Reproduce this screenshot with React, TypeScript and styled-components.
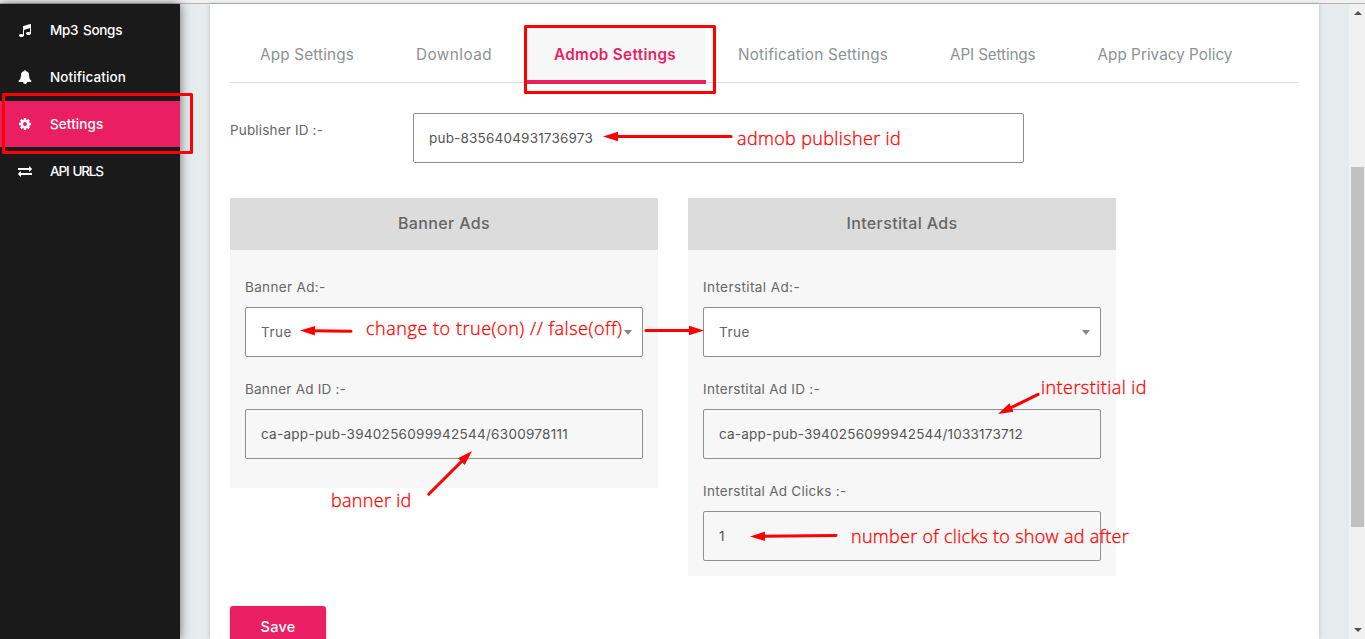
import React from 'react';
import styled, { createGlobalStyle, css } from 'styled-components';

const PINK = '#ea1f63';
const RED = '#ff0000';

const Global = createGlobalStyle`
  *, *::before, *::after { box-sizing: border-box; }
  body { margin: 0; overflow: hidden; background: #e6ebee; }
  button, input { font: inherit; }
`;

const Page = styled.div`
  position: relative;
  display: flex;
  flex-direction: column;
  height: 639px;
  overflow: hidden;
  font-family: Inter, "Liberation Sans", sans-serif;
`;

const TopEdge = styled.div`
  flex: none;
  height: 4px;
  background: #f1f1f1;
  border-bottom: 1px solid #b4b4b4;
`;

const Body = styled.div`
  flex: 1;
  display: flex;
  min-height: 0;
  background: #e6ebee;
`;

const Sidebar = styled.nav`
  flex: none;
  position: relative;
  width: 180px;
  padding-top: 3px;
  background: #1a1a1a;
  box-shadow: 0 0 10px rgba(0, 0, 0, 0.55);
`;

const NavItem = styled.a<{ $active?: boolean; $spacing: number }>`
  display: flex;
  align-items: center;
  gap: 18px;
  height: 46px;
  margin-bottom: 1px;
  padding-left: 18px;
  color: #fff;
  background: ${(p) => (p.$active ? PINK : 'transparent')};
  font-size: 13.5px;
  font-weight: 500;
  letter-spacing: ${(p) => p.$spacing}px;
  word-spacing: 1.5px;
`;

const NavIcon = styled.svg`
  flex: none;
  width: 14px;
  height: 14px;
  fill: #fff;
`;

const Card = styled.main`
  flex: none;
  width: 1109px;
  margin-left: 30px;
  padding: 24px 21px 0 20px;
  background: #fff;
  box-shadow: 0 0 4px rgba(60, 80, 90, 0.3);
`;

const Tabs = styled.div`
  display: flex;
  gap: 2px;
  height: 55px;
  margin-bottom: 30px;
  border-bottom: 1px solid #dddddd;
`;

const Tab = styled.a<{ $width: number; $spacing: number; $active?: boolean }>`
  flex: none;
  width: ${(p) => p.$width}px;
  height: 56px;
  padding-left: 30px;
  line-height: 54px;
  white-space: nowrap;
  font-size: 15.25px;
  letter-spacing: ${(p) => p.$spacing}px;
  color: #8d9295;
  ${(p) =>
    p.$active &&
    css`
      color: ${PINK};
      font-weight: 600;
      background: #f7f7f7;
      border-bottom: 4px solid ${PINK};
    `}
`;

const PublisherRow = styled.div`
  display: flex;
  margin-bottom: 35px;
`;

const Label = styled.label<{ $spacing?: number }>`
  display: block;
  height: 20px;
  line-height: 20px;
  white-space: nowrap;
  font-size: 13.5px;
  letter-spacing: ${(p) => p.$spacing ?? 0.28}px;
  color: #666;
`;

const PublisherLabel = styled(Label)`
  width: 183px;
  margin-top: 7px;
`;

const fieldBox = css`
  display: block;
  height: 50px;
  border: 1px solid #8f8f8f;
  border-radius: 2px;
  padding: 0 15px;
  font-size: 13.5px;
  color: #555;
`;

const TextInput = styled.input<{ $width: number; $spacing: number }>`
  ${fieldBox}
  width: ${(p) => p.$width}px;
  letter-spacing: ${(p) => p.$spacing}px;
  background: transparent;
  outline: none;
`;

const Select = styled.div`
  ${fieldBox}
  display: flex;
  align-items: center;
  justify-content: space-between;
  padding-right: 10px;
  letter-spacing: 0.5px;
  color: #666;
  background: #fff;

  &::after {
    content: '';
    border: 4px solid transparent;
    border-top: 5px solid #888;
    border-bottom: 0;
  }
`;

const Panels = styled.div`
  display: flex;
  align-items: flex-start;
  gap: 30px;
`;

const Panel = styled.section<{ $bottom: number }>`
  width: 428px;
  padding-bottom: ${(p) => p.$bottom}px;
  background: #f7f7f7;
`;

const PanelTitle = styled.h2`
  margin: 0 0 27px;
  height: 52px;
  line-height: 51px;
  text-align: center;
  font-size: 16px;
  font-weight: 500;
  letter-spacing: 0.36px;
  color: #666;
  background: #dcdcdc;
`;

const PanelBody = styled.div`
  display: flex;
  flex-direction: column;
  gap: 22px;
  padding: 0 15px;
`;

const Field = styled.div`
  display: flex;
  flex-direction: column;
  gap: 10px;
`;

const SaveButton = styled.button`
  display: block;
  width: 96px;
  height: 42px;
  margin-top: 30px;
  padding: 0 0 2px;
  border: 0;
  border-radius: 3px;
  color: #fff;
  background: ${PINK};
  box-shadow: 0 1px 3px rgba(0, 0, 0, 0.25);
  font-size: 14.5px;
  font-weight: 500;
  letter-spacing: 0.26px;
`;

const Scrollbar = styled.div`
  display: flex;
  flex-direction: column;
  align-items: center;
  width: 16px;
  margin-left: auto;
  padding: 7px 0 7px 1px;
  background: #f1f1f1;
`;

const Thumb = styled.div`
  width: 13px;
  height: 360px;
  margin: 152px 0 auto;
  background: #c1c1c1;
`;

const ScrollArrow = styled.div<{ $down?: boolean }>`
  border: 4px solid transparent;
  ${(p) =>
    p.$down
      ? css`border-top-color: #505050; border-bottom: 0;`
      : css`border-bottom-color: #505050; border-top: 0;`}
`;

const Marks = styled.svg`
  position: absolute;
  inset: 0;
  pointer-events: none;
`;

const Note = styled.span<{ $x: number; $y: number; $spacing: number }>`
  position: absolute;
  left: ${(p) => p.$x}px;
  top: ${(p) => p.$y}px;
  font: 300 18px/24px "Open Sans", "Noto Sans", sans-serif;
  letter-spacing: ${(p) => p.$spacing}px;
  white-space: nowrap;
  color: ${RED};
  -webkit-text-stroke: 0.3px ${RED};
`;

const icons = {
  music:
    'M1664 224v1120q0 50-34 89t-86 60.5-103.5 32-96.5 10.5-96.5-10.5-103.5-32-86-60.5-34-89 34-89 86-60.5 103.5-32 96.5-10.5q105 0 192 39v-537l-768 237v709q0 50-34 89t-86 60.5-103.5 32-96.5 10.5-96.5-10.5-103.5-32-86-60.5-34-89 34-89 86-60.5 103.5-32 96.5-10.5q105 0 192 39v-967q0-31 19-56.5t49-35.5l832-256q12-4 28-4 40 0 68 28t28 68z',
  bell:
    'M912 1696q0-16-16-16-59 0-101.5-42.5t-42.5-101.5q0-16-16-16t-16 16q0 73 51.5 124.5t124.5 51.5q16 0 16-16zm816-288q0 52-38 90t-90 38h-448q0 106-75 181t-181 75-181-75-75-181h-448q-52 0-90-38t-38-90q50-42 91-88t85-119.5 74.5-158.5 50-206 19.5-260q0-152 117-282.5t307-158.5q-8-19-8-39 0-40 28-68t68-28 68 28 28 68q0 20-8 39 190 28 307 158.5t117 282.5q0 139 19.5 260t50 206 74.5 158.5 85 119.5 91 88z',
  cog:
    'M1152 896q0-106-75-181t-181-75-181 75-75 181 75 181 181 75 181-75 75-181zm512-109v222q0 12-8 23t-20 13l-185 28q-19 54-39 91 35 50 107 138 10 12 10 25t-9 23q-27 37-99 108t-94 71q-12 0-26-9l-138-108q-44 23-91 38-16 136-29 186-7 28-36 28h-222q-14 0-24.5-8.5t-11.5-21.5l-28-184q-49-16-90-37l-141 107q-10 9-25 9-14 0-25-11-126-114-165-168-7-10-7-23 0-12 8-23 15-21 51-66.5t54-70.5q-27-50-41-99l-183-27q-13-2-21-12.5t-8-23.5v-222q0-12 8-23t19-13l186-28q14-46 39-92-40-57-107-138-10-12-10-24 0-10 9-23 26-36 98.5-107.5t94.5-71.5q13 0 26 10l138 107q44-23 91-38 16-136 29-186 7-28 36-28h222q14 0 24.5 8.5t11.5 21.5l28 184q49 16 90 37l142-107q9-9 24-9 13 0 25 10 129 119 165 170 7 8 7 22 0 12-8 23-15 21-51 66.5t-54 70.5q26 50 41 98l183 28q13 2 21 12.5t8 23.5z',
  exchange:
    'M1792 1184v192q0 13-9.5 22.5t-22.5 9.5h-1376v192q0 13-9.5 22.5t-22.5 9.5q-12 0-24-10l-319-320q-9-9-9-22 0-14 9-23l320-320q9-9 23-9 13 0 22.5 9.5t9.5 22.5v192h1376q13 0 22.5 9.5t9.5 22.5zm0-544q0 14-9 23l-320 320q-9 9-23 9-13 0-22.5-9.5t-9.5-22.5v-192h-1376q-13 0-22.5-9.5t-9.5-22.5v-192q0-13 9.5-22.5t22.5-9.5h1376v-192q0-14 9-23t23-9q12 0 24 10l319 319q9 9 9 23z',
};

const navItems = [
  { label: 'Mp3 Songs', icon: icons.music, spacing: -0.3 },
  { label: 'Notification', icon: icons.bell, spacing: 0.1 },
  { label: 'Settings', icon: icons.cog, spacing: 0.1, active: true },
  { label: 'API URLS', icon: icons.exchange, spacing: -1.15 },
];

const tabs = [
  { label: 'App Settings', width: 154, spacing: 0.175 },
  { label: 'Download', width: 136, spacing: 0.47 },
  { label: 'Admob Settings', width: 182, spacing: 0.34, active: true },
  { label: 'Notification Settings', width: 210, spacing: 0.21 },
  { label: 'API Settings', width: 145.5, spacing: -0.13 },
  { label: 'App Privacy Policy', width: 195, spacing: 0.03 },
];

// Each arrow runs from its tail to its tip.
const arrows = [
  [732, 136.5, 603, 136.5],
  [352, 331.3, 300, 330.5],
  [645, 330.5, 704, 330.5],
  [428, 495, 472, 451],
  [1039, 394, 998, 414],
  [837, 535.5, 750, 536.5],
];

function Arrow({ points }: { points: number[] }) {
  const [x1, y1, x2, y2] = points;
  const angle = (Math.atan2(y2 - y1, x2 - x1) * 180) / Math.PI;
  const length = Math.hypot(x2 - x1, y2 - y1);
  return (
    <g transform={`translate(${x1} ${y1}) rotate(${angle})`}>
      <line x1="1" x2={length - 12} y1="0" y2="0" stroke={RED} strokeWidth="3" strokeLinecap="round" />
      <path d={`M${length} 0l-15 -4.7v9.4z`} fill={RED} />
    </g>
  );
}

export default function App() {
  return (
    <Page>
      <Global />
      <TopEdge />
      <Body>
        <Sidebar>
          {navItems.map((item) => (
            <NavItem key={item.label} $active={item.active} $spacing={item.spacing}>
              <NavIcon viewBox="0 0 1792 1792">
                <path d={item.icon} />
              </NavIcon>
              {item.label}
            </NavItem>
          ))}
        </Sidebar>
        <Card>
          <Tabs>
            {tabs.map((tab) => (
              <Tab key={tab.label} $width={tab.width} $spacing={tab.spacing} $active={tab.active}>
                {tab.label}
              </Tab>
            ))}
          </Tabs>
          <PublisherRow>
            <PublisherLabel $spacing={0.165}>Publisher ID :-</PublisherLabel>
            <TextInput $width={611} $spacing={0.193} defaultValue="pub-8356404931736973" />
          </PublisherRow>
          <Panels>
            <Panel $bottom={29}>
              <PanelTitle>Banner Ads</PanelTitle>
              <PanelBody>
                <Field>
                  <Label $spacing={0.337}>Banner Ad:-</Label>
                  <Select>True</Select>
                </Field>
                <Field>
                  <Label $spacing={0.216}>Banner Ad ID :-</Label>
                  <TextInput $width={398} $spacing={0.276} defaultValue="ca-app-pub-3940256099942544/6300978111" />
                </Field>
              </PanelBody>
            </Panel>
            <Panel $bottom={15}>
              <PanelTitle>Interstital Ads</PanelTitle>
              <PanelBody>
                <Field>
                  <Label $spacing={0.409}>Interstital Ad:-</Label>
                  <Select>True</Select>
                </Field>
                <Field>
                  <Label>Interstital Ad ID :-</Label>
                  <TextInput $width={398} $spacing={0.219} defaultValue="ca-app-pub-3940256099942544/1033173712" />
                </Field>
                <Field>
                  <Label>Interstital Ad Clicks :-</Label>
                  <TextInput $width={398} $spacing={0} defaultValue="1" />
                </Field>
              </PanelBody>
            </Panel>
          </Panels>
          <SaveButton>Save</SaveButton>
        </Card>
        <Scrollbar>
          <ScrollArrow />
          <Thumb />
          <ScrollArrow $down />
        </Scrollbar>
      </Body>
      <Marks width="1365" height="639">
        <g fill="none" stroke={RED} strokeWidth="3" strokeLinejoin="round">
          <rect x="3.5" y="94.5" width="188" height="58" />
          <rect x="525.5" y="26.5" width="189" height="66" />
        </g>
        {arrows.map((points) => (
          <Arrow key={points.join()} points={points} />
        ))}
      </Marks>
      <Note $x={737} $y={126} $spacing={0.353}>admob publisher id</Note>
      <Note $x={366} $y={316} $spacing={0.54}>change to true(on) // false(off)</Note>
      <Note $x={331} $y={488} $spacing={0.3}>banner id</Note>
      <Note $x={1041} $y={375} $spacing={0.45}>interstitial id</Note>
      <Note $x={851} $y={524} $spacing={0.292}>number of clicks to show ad after</Note>
    </Page>
  );
}
